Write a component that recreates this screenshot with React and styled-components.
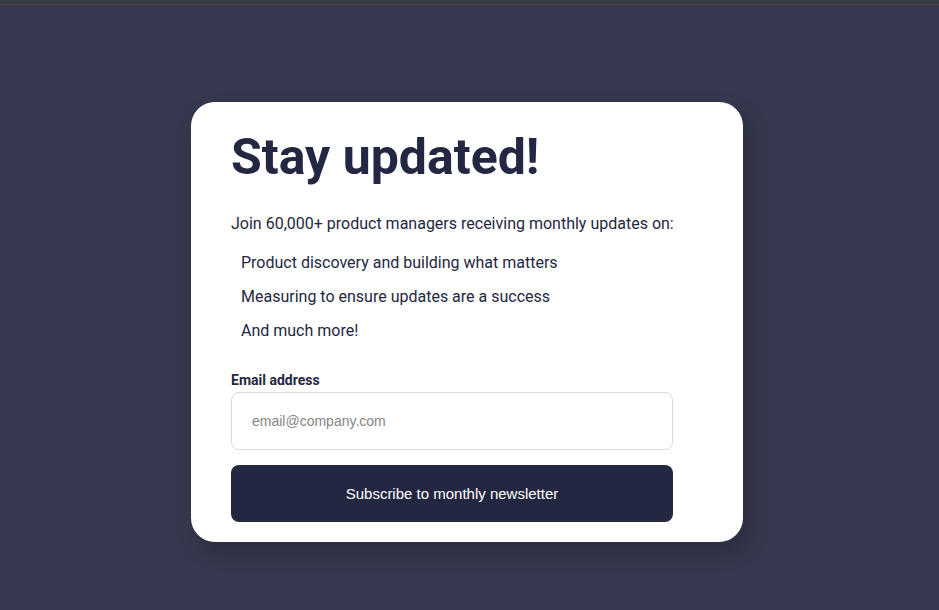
import styled, { createGlobalStyle } from "styled-components"

const Global = createGlobalStyle`
  html, body {
    margin: 0;
    padding: 0;
    background: #36384f;
  }
  * { box-sizing: border-box; }
`

const Page = styled.div`
  min-height: 610px;
  display: flex;
  flex-direction: column;
  background: #36384f;
`

const TopStrip = styled.div`
  height: 5px;
  background: #393a43;
  border-bottom: 1px solid #4a4741;
`

const Stage = styled.main`
  display: flex;
  justify-content: center;
  padding: 97px 5px 0 0;
`

const Card = styled.section`
  width: 552px;
  height: 440px;
  background: #ffffff;
  border-radius: 24px;
  padding: 25px 40px 20px 40px;
  box-shadow: 6px 10px 20px rgba(0, 0, 0, 0.22);
  font-family: Roboto, "Liberation Sans", sans-serif;
  color: #242742;
`

const Title = styled.h1`
  margin: 0;
  font-size: 50px;
  font-weight: 700;
  line-height: 60px;
  color: #242742;
`

const Lead = styled.p`
  margin: 27px 0 0;
  font-size: 16px;
  line-height: 20px;
  white-space: nowrap;
`

const List = styled.ul`
  list-style: none;
  margin: 19px 0 0;
  padding: 0 0 0 10px;
  display: flex;
  flex-direction: column;
  gap: 14px;
`

const Item = styled.li`
  font-size: 16px;
  line-height: 20px;
`

const Form = styled.form`
  width: 442px;
  margin-top: 31px;
  display: flex;
  flex-direction: column;
`

const Label = styled.label`
  font-size: 14px;
  font-weight: 700;
  line-height: 16px;
  margin-bottom: 4px;
`

const Input = styled.input`
  height: 58px;
  width: 100%;
  border: 1px solid #d9d9d9;
  border-radius: 8px;
  padding: 0 20px;
  font-family: "Liberation Sans", Arial, sans-serif;
  font-size: 14px;
  color: #242742;
  outline: none;
  &::placeholder { color: #858585; }
`

const Button = styled.button`
  margin-top: 15px;
  height: 57px;
  width: 100%;
  border: none;
  border-radius: 8px;
  background: #242742;
  color: #ffffff;
  font-family: "Liberation Sans", Arial, sans-serif;
  font-size: 15px;
  cursor: pointer;
`

const updates = [
  "Product discovery and building what matters",
  "Measuring to ensure updates are a success",
  "And much more!",
]

export default function App() {
  return (
    <Page>
      <Global />
      <TopStrip />
      <Stage>
        <Card>
          <Title>Stay updated!</Title>
          <Lead>Join 60,000+ product managers receiving monthly updates on:</Lead>
          <List>
            {updates.map(u => <Item key={u}>{u}</Item>)}
          </List>
          <Form onSubmit={e => e.preventDefault()}>
            <Label htmlFor="email">Email address</Label>
            <Input id="email" type="email" placeholder="email@company.com" />
            <Button type="submit">Subscribe to monthly newsletter</Button>
          </Form>
        </Card>
      </Stage>
    </Page>
  )
}
